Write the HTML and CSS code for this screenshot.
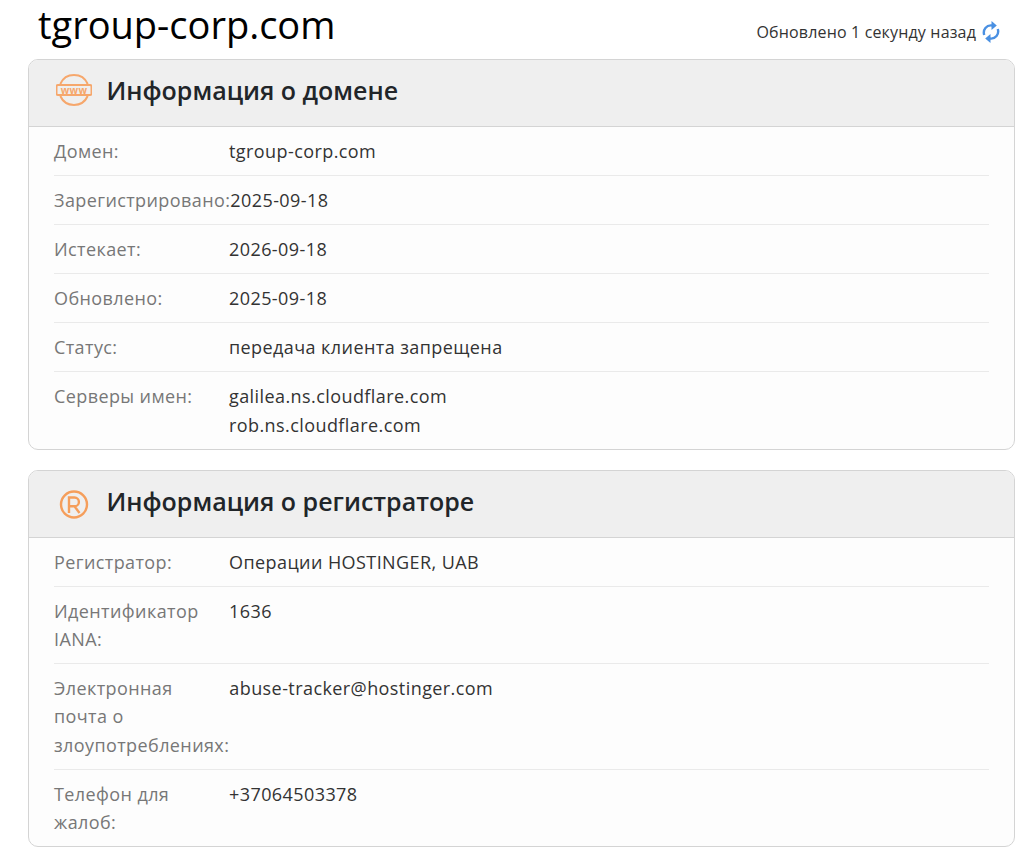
FILE: index.html
```html
<!DOCTYPE html>
<html lang="ru">
<head>
<meta charset="utf-8">
<title>tgroup-corp.com</title>
<link rel="stylesheet" href="styles.css">
</head>
<body>
<main class="page">
  <header class="top">
    <h1 class="domain">tgroup-corp.com</h1>
    <div class="updated">
      <span>Обновлено 1 секунду назад</span>
      <svg class="refresh" viewBox="0 0 18 22" width="18" height="22" fill="none" stroke="#4a90e2" stroke-width="2.400">
        <path d="M2.200 14C.6 8.500 4.500 3.800 10 4.500"/>
        <path d="M15.800 8C17.400 13.500 13.500 18.200 8 17.500"/>
        <path d="M9.500 0L14.800 4.600 9.500 9Z" fill="#4a90e2" stroke="none"/>
        <path d="M8.500 22L3.200 17.400 8.500 13Z" fill="#4a90e2" stroke="none"/>
      </svg>
    </div>
  </header>

  <section class="card">
    <div class="card-head">
      <svg class="icon" viewBox="0 0 36 36" width="36" height="36" fill="none" stroke="#f6a76c" stroke-width="2">
        <path d="M4.300 12A15 15 0 0 1 31.700 12"/>
        <path d="M4.300 24A15 15 0 0 0 31.700 24"/>
        <rect x="0.500" y="13" width="35" height="10" rx="1.500"/>
        <text class="www" x="18" y="21.500" text-anchor="middle">www</text>
      </svg>
      <h2 class="card-title">Информация о домене</h2>
    </div>
    <div class="rows">
      <div class="row"><div class="label">Домен:</div><div class="value">tgroup-corp.com</div></div>
      <div class="row"><div class="label">Зарегистрировано:</div><div class="value">2025-09-18</div></div>
      <div class="row"><div class="label">Истекает:</div><div class="value">2026-09-18</div></div>
      <div class="row"><div class="label">Обновлено:</div><div class="value">2025-09-18</div></div>
      <div class="row"><div class="label">Статус:</div><div class="value">передача клиента запрещена</div></div>
      <div class="row"><div class="label">Серверы имен:</div><div class="value">galilea.ns.cloudflare.com<br>rob.ns.cloudflare.com</div></div>
    </div>
  </section>

  <section class="card">
    <div class="card-head">
      <svg class="icon" viewBox="0 0 36 36" width="36" height="36" fill="none" stroke="#f59e5b">
        <circle cx="18" cy="21.500" r="13" stroke-width="2.400"/>
        <path d="M13 30V14.500h5.500a4.400 4.400 0 0 1 0 8.800H13M18.500 23.300L23.500 30" stroke-width="2.400"/>
      </svg>
      <h2 class="card-title">Информация о регистраторе</h2>
    </div>
    <div class="rows rows-compact">
      <div class="row"><div class="label">Регистратор:</div><div class="value">Операции HOSTINGER, UAB</div></div>
      <div class="row"><div class="label">Идентификатор IANA:</div><div class="value">1636</div></div>
      <div class="row"><div class="label">Электронная почта о злоупотреблениях:</div><div class="value">abuse-tracker@hostinger.com</div></div>
      <div class="row"><div class="label">Телефон для жалоб:</div><div class="value">+37064503378</div></div>
    </div>
  </section>
</main>
</body>
</html>
```
FILE: styles.css
```css
* { box-sizing: border-box; }
html, body { margin: 0; padding: 0; background: #fff; }
body { font-family: "Open Sans", sans-serif; color: #333; }
.page { padding: 0 15px 0 28px; }
.top { display: flex; justify-content: space-between; align-items: flex-end; height: 59px; padding: 0 15px 15px 10px; }
.domain { margin: 0; font-size: 38px; font-weight: 400; color: #000; line-height: 48px; align-self: flex-start; }
.updated { display: flex; align-items: center; gap: 6px; font-size: 16px; letter-spacing: .16px; line-height: 24px; color: #333; }
.refresh { display: block; }
.card { border: 1px solid #d4d4d4; border-radius: 10px; background: #fdfdfd; margin-bottom: 20px; overflow: hidden; }
.card-head { display: flex; align-items: center; gap: 14.500px; height: 67px; padding: 0 0 6px 27px; background: #efefef; border-bottom: 1px solid #d4d4d4; }
.icon { display: block; flex: none; }
.www { font-family: "Open Sans", sans-serif; font-size: 10px; font-weight: 700; fill: #f6a76c; stroke: none; letter-spacing: .3px; }
.card-title { margin: 0; font-size: 25px; font-weight: 600; line-height: 34px; color: #212529; }
.rows { padding: 0 25px; }
.row { display: flex; padding: 9.500px 0; font-size: 18px; line-height: 29px; border-bottom: 1px solid #eaeaea; }
.row:last-child { border-bottom: 0; }
.rows-compact .row { padding: 10px 0 9.200px; line-height: 28.500px; }
.label { flex: 0 0 175px; color: #777; letter-spacing: .4px; }
.value { color: #333; letter-spacing: .42px; }
```
